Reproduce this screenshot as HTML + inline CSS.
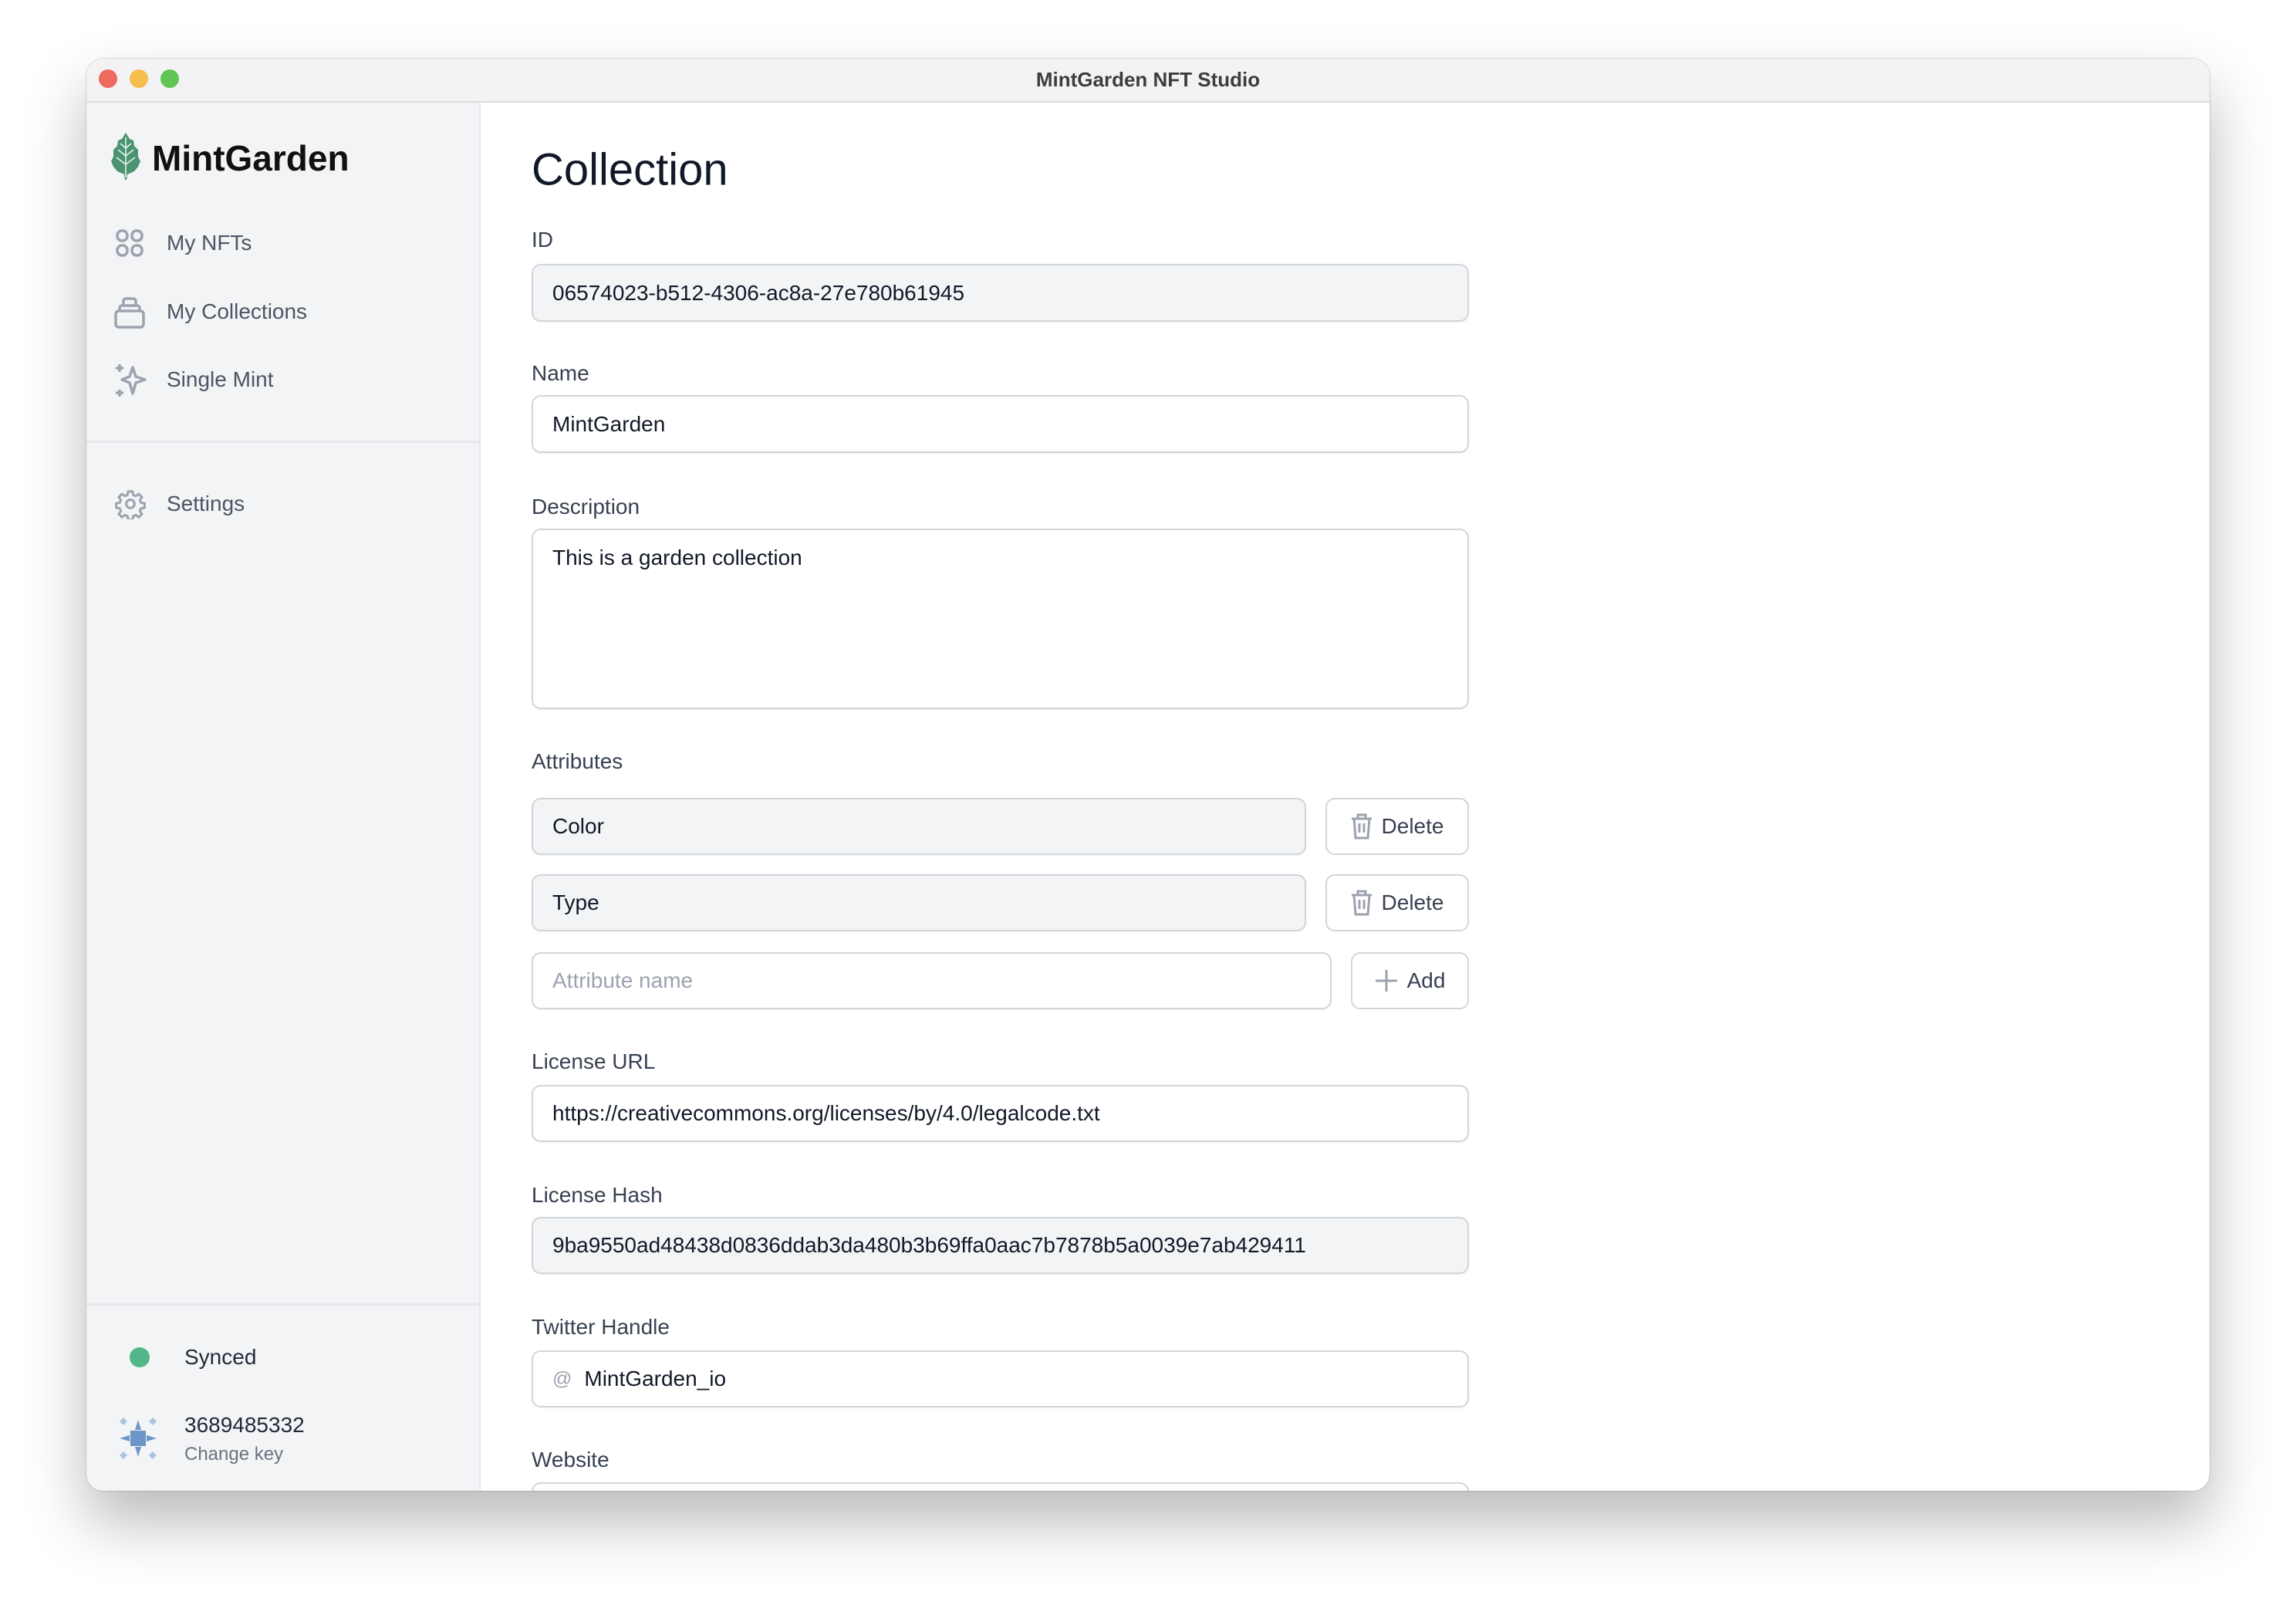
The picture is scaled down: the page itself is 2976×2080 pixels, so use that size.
<!DOCTYPE html>
<html><head><meta charset="utf-8"><style>
*{box-sizing:border-box;margin:0;padding:0}
body{width:2976px;height:2080px;background:#fff;font-family:"Liberation Sans",sans-serif;position:relative;overflow:hidden}
.win{position:absolute;left:112px;top:76px;width:2752px;height:1856px;border-radius:22px;overflow:hidden;background:#fff;box-shadow:0 40px 80px rgba(0,0,0,.28),0 0 0 1px rgba(0,0,0,.12)}
.tb{position:absolute;left:0;top:0;width:100%;height:57px;background:#f3f2f4;border-bottom:2px solid #dcdcde}
.tl{position:absolute;top:14px;width:24px;height:24px;border-radius:50%}
.title{position:absolute;left:0;right:0;top:12px;text-align:center;font-size:26px;font-weight:bold;color:#3d3d3f}
.side{position:absolute;left:0;top:57px;width:511px;bottom:0;background:#f3f4f6;border-right:2px solid #e5e7eb}
.abs{position:absolute}
.nav{position:absolute;left:104px;font-size:28px;color:#4b5563;transform:translateY(-50%);white-space:nowrap}
.hr{position:absolute;left:0;width:100%;height:3px;background:#e5e7eb}
.lab{position:absolute;font-size:28px;color:#374151;transform:translateY(-50%);white-space:nowrap}
.inp{position:absolute;border:2px solid #d1d5db;border-radius:12px;background:#fff;font-size:28px;color:#111827;padding-left:25px;display:flex;align-items:center;box-shadow:0 1px 2px rgba(0,0,0,.05);white-space:nowrap}
.ro{background:#f3f4f6}
.btn{position:absolute;border:2px solid #d1d5db;border-radius:12px;background:#fff;font-size:28px;color:#374151;display:flex;align-items:center;justify-content:center;gap:12px}
</style></head><body>
<div class="win">
 <div class="tb">
  <div class="tl" style="left:16px;background:#ee6a5f"></div>
  <div class="tl" style="left:56px;background:#f5be4f"></div>
  <div class="tl" style="left:96px;background:#61c554"></div>
  <div class="title">MintGarden NFT Studio</div>
 </div>
 <div class="side">
  <svg class="abs" style="left:32px;top:39px" width="38" height="61" viewBox="0 0 38 61"><path d="M19 0 L24 8 L29 10 L30 17 L35 22 L35 31 L38 37 L35 44 L30 50 L21 54 L20 61 L18 61 L17 54 L8 50 L3 44 L0 37 L3 31 L3 22 L8 17 L9 10 L14 8Z" fill="#4b9472"/><path d="M19 6V58M19 20l-7-6M19 20l7-6M19 30l-10-8M19 30l10-8M19 41l-12-9M19 41l12-9" stroke="#e8f3ec" stroke-width="1.6" fill="none"/></svg>
  <div class="abs" style="left:85px;top:72px;font-size:46px;font-weight:bold;color:#111;transform:translateY(-50%);white-space:nowrap">MintGarden</div>
  <svg class="abs" style="left:38px;top:164px" width="36" height="36" viewBox="0 0 36 36" fill="none" stroke="#9ca3af" stroke-width="3.5"><rect x="2" y="2" width="13" height="13" rx="6"/><rect x="21" y="2" width="13" height="13" rx="6"/><rect x="2" y="21" width="13" height="13" rx="6"/><rect x="21" y="21" width="13" height="13" rx="6"/></svg>
  <div class="nav" style="top:182px">My NFTs</div>
  <svg class="abs" style="left:36px;top:251px" width="40" height="42" viewBox="0 0 40 42" fill="none" stroke="#9ca3af" stroke-width="3.5"><rect x="2" y="19" width="36" height="21" rx="4"/><path d="M7 19v-4a3 3 0 0 1 3-3h20a3 3 0 0 1 3 3v4M12 12V6a3 3 0 0 1 3-3h10a3 3 0 0 1 3 3v6"/></svg>
  <div class="nav" style="top:271px">My Collections</div>
  <svg class="abs" style="left:36px;top:337px" width="42" height="46" viewBox="0 0 42 46" fill="none" stroke="#9ca3af" stroke-width="3.5" stroke-linejoin="round"><path d="M24 6 L28 18 L40 22 L28 26 L24 40 L20 26 L10 22 L20 18Z"/><path d="M7 2v10M2 7h10M7 35v9M2 39h10"/></svg>
  <div class="nav" style="top:359px">Single Mint</div>
  <div class="hr" style="top:438px"></div>
  <svg class="abs" style="left:37px;top:500px" width="40" height="40" viewBox="0 0 24 24" fill="none" stroke="#9ca3af" stroke-width="1.8"><path d="M10.3 2.3h3.4l.6 2.8 1.9.8 2.4-1.6 2.4 2.4-1.6 2.4.8 1.9 2.8.6v3.4l-2.8.6-.8 1.9 1.6 2.4-2.4 2.4-2.4-1.6-1.9.8-.6 2.8h-3.4l-.6-2.8-1.9-.8-2.4 1.6-2.4-2.4 1.6-2.4-.8-1.9-2.8-.6v-3.4l2.8-.6.8-1.9-1.6-2.4 2.4-2.4 2.4 1.6 1.9-.8z"/><circle cx="12" cy="12" r="3.2"/></svg>
  <div class="nav" style="top:520px">Settings</div>
  <div class="hr" style="top:1556px"></div>
  <div class="abs" style="left:56px;top:1613px;width:26px;height:26px;border-radius:50%;background:#52b788"></div>
  <div class="nav" style="left:127px;top:1626px;color:#1f2937">Synced</div>
  <svg class="abs" style="left:39px;top:1703px" width="56" height="56" viewBox="0 0 56 56" fill="#6b96c6"><rect x="18" y="18" width="20" height="20"/><path d="M4 6l5-5 5 5-5 5zM42 6l5-5 5 5-5 5zM4 50l5-5 5 5-5 5zM42 50l5-5 5 5-5 5z" fill="#a9c3e0"/><path d="M28 4l4 13h-8zM28 52l-4-13h8zM4 28l13-4v8zM52 28l-13 4v-8z"/></svg>
  <div class="nav" style="left:127px;top:1714px;color:#1f2937">3689485332</div>
  <div class="nav" style="left:127px;top:1752px;font-size:24px;color:#6b7280">Change key</div>
 </div>
 <div class="abs" style="top:0;left:577px">
  <div class="abs" style="left:0;top:144px;font-size:58px;color:#111827;transform:translateY(-50%);white-space:nowrap">Collection</div>
  <div class="lab" style="top:235px">ID</div>
  <div class="inp ro" style="top:266px;width:1215px;height:75px">06574023-b512-4306-ac8a-27e780b61945</div>
  <div class="lab" style="top:408px">Name</div>
  <div class="inp" style="top:436px;width:1215px;height:75px">MintGarden</div>
  <div class="lab" style="top:581px">Description</div>
  <div class="inp" style="top:609px;width:1215px;height:234px;align-items:flex-start;padding-top:20px">This is a garden collection</div>
  <div class="lab" style="top:911px">Attributes</div>
  <div class="inp ro" style="top:958px;width:1004px;height:74px">Color</div>
  <div class="btn" style="top:958px;left:1029px;width:186px;height:74px"><svg width="28" height="34" viewBox="0 0 28 34" fill="none" stroke="#9ca3af" stroke-width="3"><path d="M1 7h26M9 7V2h10v5M4 7l2 25h16l2-25M11 13v12M17 13v12"/></svg>Delete</div>
  <div class="inp ro" style="top:1057px;width:1004px;height:74px">Type</div>
  <div class="btn" style="top:1057px;left:1029px;width:186px;height:74px"><svg width="28" height="34" viewBox="0 0 28 34" fill="none" stroke="#9ca3af" stroke-width="3"><path d="M1 7h26M9 7V2h10v5M4 7l2 25h16l2-25M11 13v12M17 13v12"/></svg>Delete</div>
  <div class="inp" style="top:1158px;width:1037px;height:74px;color:#9ca3af">Attribute name</div>
  <div class="btn" style="top:1158px;left:1062px;width:153px;height:74px"><svg width="30" height="30" viewBox="0 0 30 30" stroke="#9ca3af" stroke-width="3"><path d="M15 1v28M1 15h28"/></svg>Add</div>
  <div class="lab" style="top:1300px">License URL</div>
  <div class="inp" style="top:1330px;width:1215px;height:74px">https://creativecommons.org/licenses/by/4.0/legalcode.txt</div>
  <div class="lab" style="top:1473px">License Hash</div>
  <div class="inp ro" style="top:1501px;width:1215px;height:74px">9ba9550ad48438d0836ddab3da480b3b69ffa0aac7b7878b5a0039e7ab429411</div>
  <div class="lab" style="top:1644px">Twitter Handle</div>
  <div class="inp" style="top:1674px;width:1215px;height:74px"><span style="color:#9ca3af;font-size:25px;margin-right:16px">@</span>MintGarden_io</div>
  <div class="lab" style="top:1816px">Website</div>
  <div class="inp" style="top:1845px;width:1215px;height:74px"></div>
 </div>
</div>
</body></html>
